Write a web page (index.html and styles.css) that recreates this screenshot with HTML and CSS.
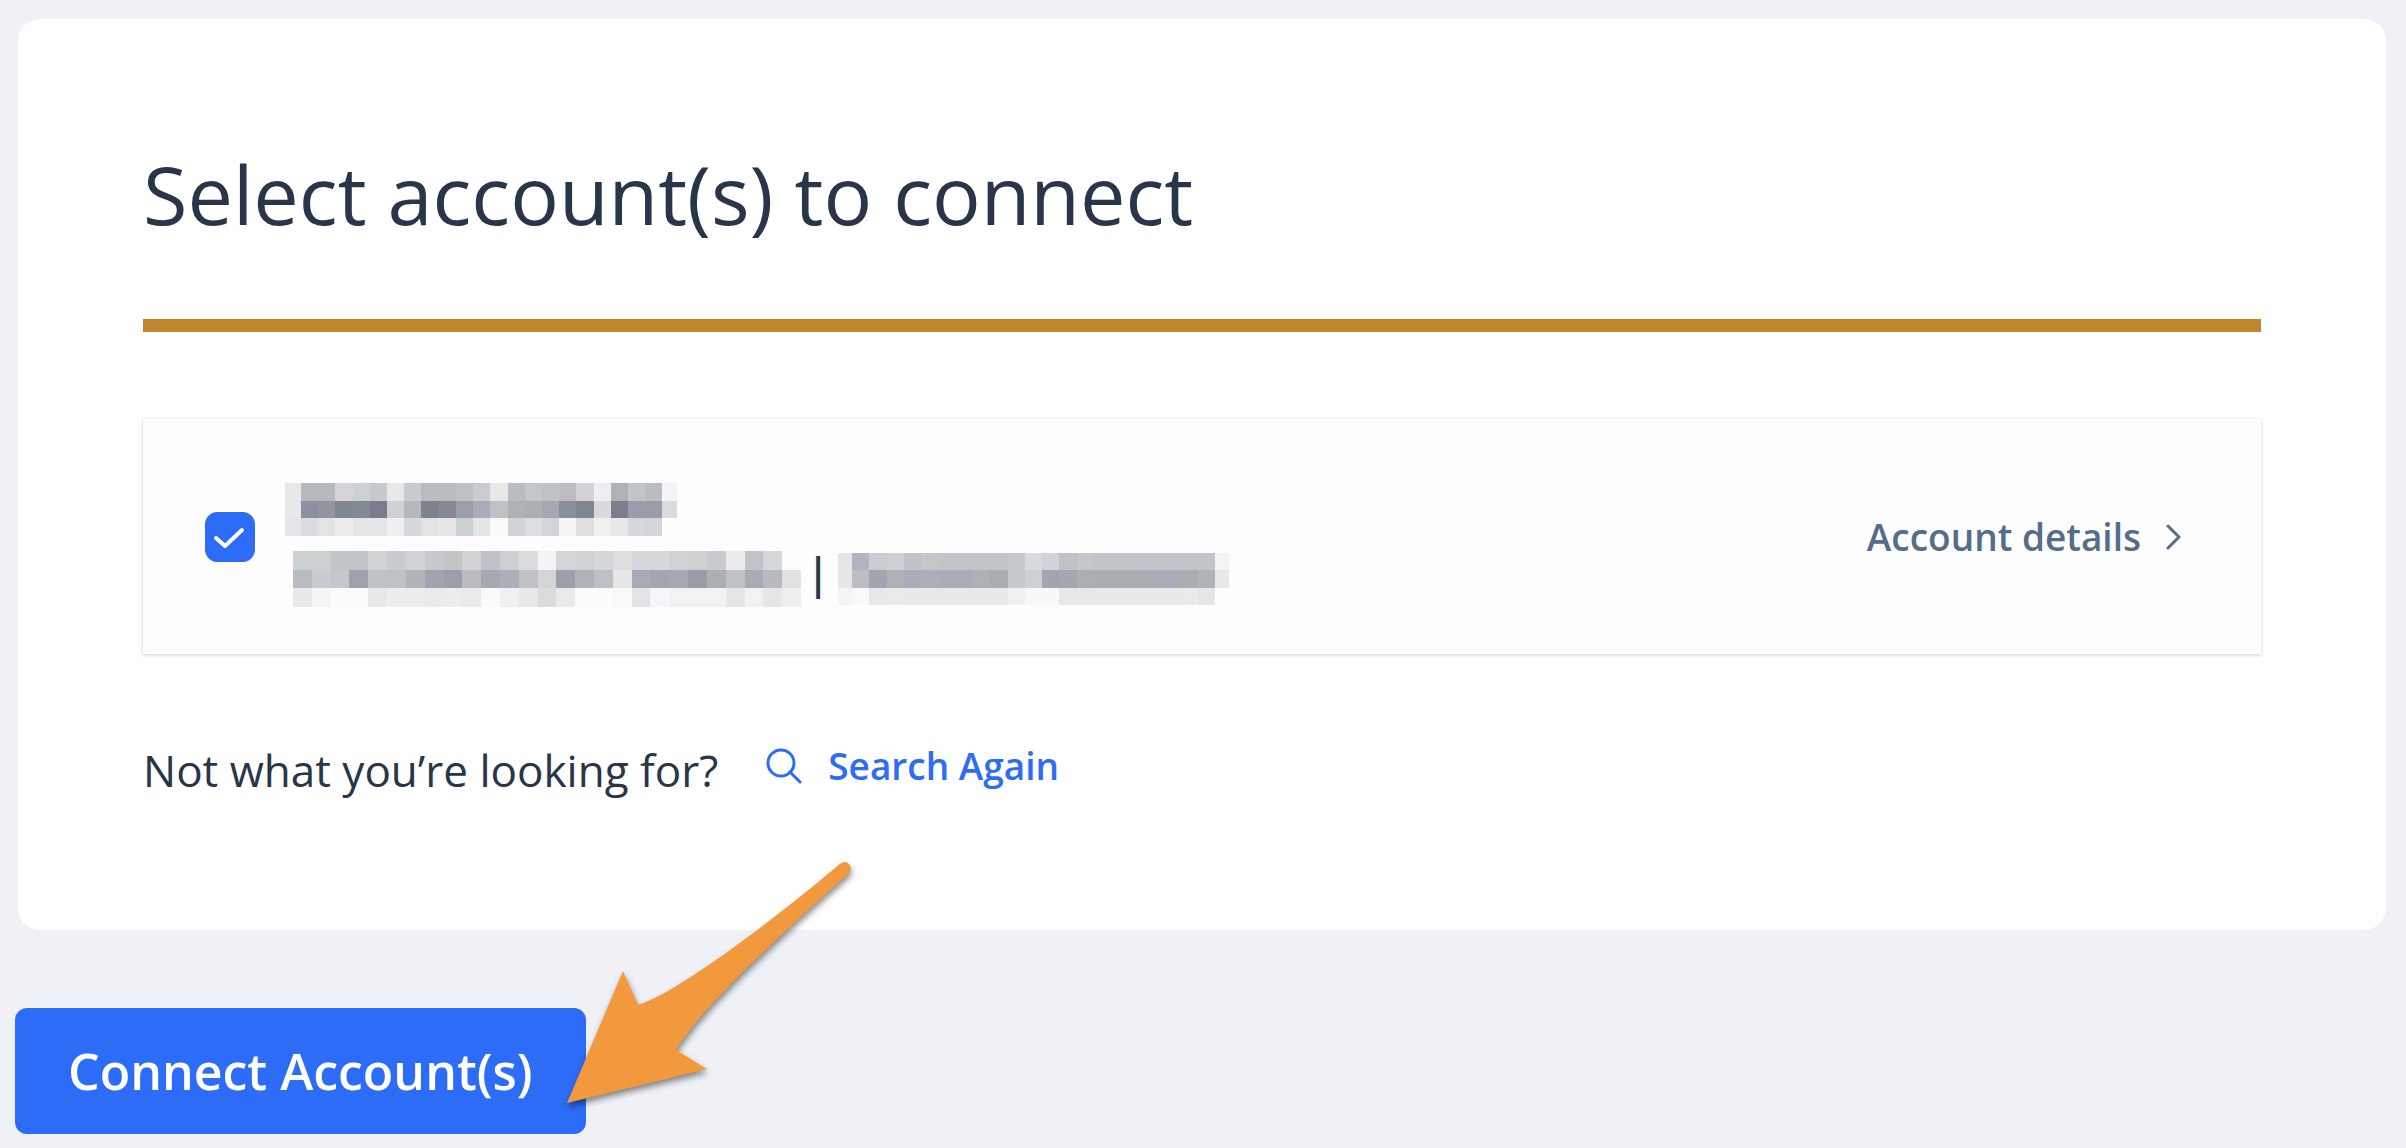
FILE: index.html
```html
<!DOCTYPE html>
<html lang="en">
<head>
    <meta charset="UTF-8">
    <title>Select account(s) to connect</title>
    <link rel="stylesheet" href="styles.css">
</head>
<body>
    <form class="page">
        <main class="card">
            <h1 class="title">Select account(s) to connect</h1>
            <hr class="divider">

            <div class="account">
                <input type="checkbox" class="account-check" id="account1" checked>
                <label class="account-info" for="account1" aria-label="Account">
                    <svg class="mosaic mosaic-name" id="name" viewBox="0.07 0 22.78 3" preserveAspectRatio="none"></svg>
                    <span class="account-meta">
                        <svg class="mosaic mosaic-address" id="address" viewBox="0 0 27 3" preserveAspectRatio="none"></svg>
                        <span class="pipe">|</span>
                        <svg class="mosaic mosaic-number" id="number" viewBox="0.18 0 22.64 3" preserveAspectRatio="none"></svg>
                    </span>
                </label>
                <a class="details" href="#">
                    Account details
                    <svg class="chevron" viewBox="0 0 16 26"><path d="M2 2l11 11L2 24"/></svg>
                </a>
            </div>

            <div class="again">
                <span class="again-text">Not what you’re looking for?</span>
                <a class="search" href="#">
                    <svg class="search-icon" viewBox="0 0 36 36"><circle cx="15" cy="15" r="13"/><path d="M24 24l10 10"/></svg>
                    Search Again
                </a>
            </div>
        </main>

        <div class="footer">
            <button type="button" class="connect">Connect Account(s)</button>
            <svg class="arrow" viewBox="0 0 300 260">
                <path d="M7 253L63 121L78 155C118 142 206 76 280 14Q285 10 289 14Q293 19 288 24C228 78 142 156 116 200L147 219Z"/>
            </svg>
        </div>
    </form>

    <script src="script.js"></script>
</body>
</html>
```
FILE: styles.css
```css
*{
    box-sizing: border-box;
    margin: 0;
    padding: 0;
}
body{
    background-color: #f0f1f6;
    color: #293548;
    font-family: "Open Sans", "Noto Sans", sans-serif;
}
.page{
    padding: 19px 20px 14px 15px;
}
/*white card*/
.card{
    margin-left: 3px;
    padding: 119px 125px 130px;
    background-color: #fff;
    border-radius: 22px;
}
.title{
    font-size: 81px;
    line-height: 112px;
    font-weight: 400;
}
.divider{
    height: 13px;
    margin: 69px 0 87px;
    border: 0;
    background-color: #c1852f;
}
/*account row*/
.account{
    display: flex;
    align-items: center;
    min-height: 235px;
    padding: 0 79px 0 62px;
    background-color: #fdfdfd;
    box-shadow: 0 1px 4px rgba(0, 0, 0, 0.2);
}
.account-check{
    appearance: none;
    flex: none;
    width: 50px;
    height: 50px;
    border: 1px solid #2d6cf6;
    border-radius: 12px;
}
.account-check:checked{
    background: #2d6cf6 url("data:image/svg+xml,%3Csvg xmlns='http://www.w3.org/2000/svg' viewBox='0 0 48 48'%3E%3Cpath d='M10 25l9 8L36 17' fill='none' stroke='white' stroke-width='4' stroke-linecap='round' stroke-linejoin='round'/%3E%3C/svg%3E") center / 100%;
}
.account-info{
    flex: 1;
    margin-left: 30px;
    padding-top: 17px;
}
.account-meta{
    display: flex;
    align-items: flex-start;
    height: 56px;
    margin-top: 15px;
    padding-left: 8px;
}
.mosaic{
    display: block;
    shape-rendering: crispEdges;
}
.mosaic-name{
    width: 392px;
    height: 53px;
}
.mosaic-address{
    width: 508px;
    height: 56px;
}
.mosaic-number{
    width: 391px;
    height: 52px;
    margin-top: 2px;
}
.pipe{
    width: 37px;
    padding-right: 3px;
    font-size: 44px;
    line-height: 42px;
    font-weight: 600;
    text-align: center;
}
.details{
    display: flex;
    align-items: center;
    gap: 25px;
    color: #536d8a;
    font-size: 37px;
    line-height: 52px;
    font-weight: 600;
    text-decoration: none;
}
.chevron{
    width: 16px;
    height: 26px;
    fill: none;
    stroke: #536d8a;
    stroke-width: 3;
    stroke-linecap: round;
    stroke-linejoin: round;
}
/*search again line*/
.again{
    display: flex;
    align-items: flex-start;
    gap: 48px;
    margin-top: 86px;
}
.again-text{
    font-size: 44px;
    line-height: 60px;
}
.search{
    display: flex;
    align-items: center;
    gap: 26px;
    color: #2d6cf6;
    font-size: 37px;
    line-height: 52px;
    font-weight: 600;
    text-decoration: none;
}
.search-icon{
    width: 36px;
    height: 36px;
    fill: none;
    stroke: #2d6cf6;
    stroke-width: 3;
    stroke-linecap: round;
}
/*button and arrow*/
.footer{
    position: relative;
    margin-top: 78px;
}
.connect{
    display: block;
    height: 126px;
    padding: 0 53px;
    border: 0;
    border-radius: 12px;
    background-color: #2d6cf6;
    color: #fff;
    font-family: inherit;
    font-size: 50px;
    font-weight: 600;
}
.arrow{
    position: absolute;
    left: 545px;
    bottom: 24px;
    width: 300px;
    height: 260px;
    overflow: visible;
    fill: #f2993e;
    filter: drop-shadow(1px 4px 3px rgba(0, 0, 0, 0.45));
    pointer-events: none;
}
```
FILE: script.js
```js
/*cell colours of the hidden account texts, row by row*/
var mosaics = {
    name: [
        'e7e8ea b6babf b6babf d2d4d8 cdd1d4 c6cace e7e8ea c8ccd0 b8bcc1 b8bcc1 bdc1c6 cbccd1 e7e9e9 b9bdc3 c3c7ca bfc3c8 bcbdc3 d2d3d8 eeeef0 afb2b8 c2c6ca b9bdc2 f3f4f5',
        'e7e8ea 8b929d 92959e 808791 838a94 777d8a d0d1d5 b4b9be 7c838d 868994 9b9fa9 a9adb7 bec2c4 aeb2b5 abb0b3 a3a8b2 888f9a 808791 d9dade 7c7f8b 999da7 999da7 d9dbde',
        'e3e5e9 d9dbdf e2e3e5 ececee e5e6e8 e5e6e8 efeff1 d7d8dc e2e3e5 e7e7e9 cacfd2 e3e4e6 fafafa d2d3d7 dcdde0 d2d4d8 f4f5f5 dedfe1 f0f0f1 e7e8e9 d6d7db d3d5d9 fdfdfd'
    ],
    address: [
        'cbd0d3 cbd0d3 c0c5c8 c1c6c8 d2d3d7 cacbd0 d2d3d7 c7c9ce c2c6c9 d1d3d6 bfc3c8 cbcfd2 dbdcdf f2f3f3 d2d4d8 d0d2d6 d5d6da dddee0 d6d7da d6d7da d0d2d5 cdd1d4 cacbd0 ebebed c0c4c9 d6d7db fdfdfd',
        'b8bcc1 c8cbd0 c4c7cc 9da1ab bec1c6 bec1c6 b1b5b9 a0a4ae 9b9fa8 babcc1 a5a9b0 abafb9 bec2c5 d4d5d9 9b9fa9 afb2b7 bdc0c5 e5e6e7 a8abb5 a2a6b0 a5a9b3 999ca5 acb0b4 bec1c6 a8abb4 b7bbbf e1e2e4',
        'e8e9eb f5f5f5 fafbfa fafbfa e7e8ea ededef ededef e9eaec ececee e9eaec f9faf9 eff0f2 e7e8ea dadbdd e9eaec fafbfa fafbfa f9f9f9 e2e3e5 f5f6f9 f0f2f4 f0f2f4 f0f2f4 e5e6e8 f0f2f4 e5e6e7 edeeef'
    ],
    number: [
        'e5e6e7 b1b5bf cbccd1 cbcfd1 bfc3c8 c3c7ca c1c5ca c1c5ca c1c5ca c1c5ca c6cace d9dadf d2d3d7 bfc3c8 c3c7ca c1c5ca c1c5ca c1c5ca c1c5ca c1c5ca c1c5ca c1c5ca f3f4f6',
        'e5e6e7 bbbfc3 a1a5af aeb2b7 a8adb7 abafb6 a9adb7 a9adb7 acb1b5 a9aeb1 c6cace cdd1d3 a1a5af a3a7b0 abafb4 a9aeb1 a9aeb2 a9aeb2 a9adb6 a9adb7 a9aeb1 afb3b8 e7e8eb',
        'f4f5f5 f8fafa e7e8ea e9eaeb e7e8ea e7e8ea e7e8ea e7e8ea e7e8ea e7e8ea eff0f2 f8f8f8 f8f8f8 e7e8ea e7e8ea e7e8ea e7e8ea e7e8ea e7e8ea e7e8ea e9eaea e5e6e8 fdfdfd'
    ]
};

for (var id in mosaics) {
    var svg = document.getElementById(id);
    mosaics[id].forEach(function(row, y){
        row.split(' ').forEach(function(color, x){
            var cell = document.createElementNS('http://www.w3.org/2000/svg', 'rect');
            cell.setAttribute('x', x);
            cell.setAttribute('y', y);
            cell.setAttribute('width', 1);
            cell.setAttribute('height', 1);
            cell.setAttribute('fill', '#' + color);
            svg.appendChild(cell);
        });
    });
}
```
